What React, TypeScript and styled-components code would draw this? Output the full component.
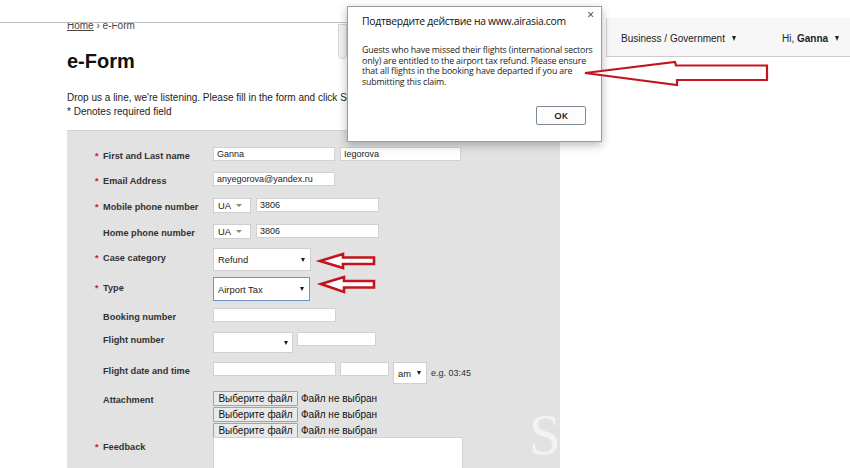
import React from "react";
import styled, { createGlobalStyle } from "styled-components";

const GlobalStyle = createGlobalStyle`
  html, body {
    margin: 0;
    padding: 0;
    background: #fff;
  }
  body {
    font-family: "Liberation Sans", Arial, sans-serif;
    color: #222;
  }
`;

const Page = styled.div`
  position: relative;
  width: 850px;
  height: 468px;
  overflow: hidden;
  display: grid;
  grid-template-columns: 606px 1fr;
  align-items: start;
`;

const Main = styled.div`
  height: 468px;
  display: flex;
  flex-direction: column;
`;

const TopStrip = styled.div`
  width: 347px;
  height: 22px;
  flex-shrink: 0;
  border-bottom: 1px solid #bdbdbd;
  display: flex;
  justify-content: flex-end;
`;

const Thumb = styled.div`
  width: 7px;
  height: 33px;
  margin-top: 24px;
  flex-shrink: 0;
  border: 1px solid #d4d4d4;
  border-radius: 0 0 4px 4px;
  background: #f2f2f2;
`;

const Content = styled.div`
  flex: 1;
  display: flex;
  flex-direction: column;
  padding-left: 67px;
`;

const Crumbs = styled.div`
  height: 8px;
  overflow: hidden;
  display: flex;
  align-items: flex-end;
  font-size: 10px;
  color: #444;
`;

const CrumbLine = styled.div`
  line-height: 11px;
  flex-shrink: 0;
  white-space: nowrap;
  a {
    color: #444;
    text-decoration: underline;
  }
`;

const Title = styled.h1`
  margin: 18px 0 0;
  font-size: 20px;
  line-height: 24px;
  font-weight: bold;
  color: #111;
`;

const Intro = styled.p`
  margin: 18px 0 0;
  font-size: 10px;
  line-height: 14px;
  color: #222;
  white-space: nowrap;
`;

const FormBox = styled.form`
  position: relative;
  overflow: hidden;
  margin-top: 11px;
  width: 493px;
  flex: 1;
  box-sizing: border-box;
  background: #e2e2e2;
  border-top: 1px solid #d2d2d2;
  padding: 16px 0 0 28px;
`;

const Watermark = styled.span`
  position: absolute;
  left: 462px;
  top: 275px;
  font-family: "Liberation Serif", "Times New Roman", serif;
  font-size: 57px;
  line-height: 57px;
  color: #f3f3f3;
`;

const Row = styled.div<{ $h: number }>`
  display: grid;
  grid-template-columns: 118px 1fr;
  align-items: start;
  height: ${(p) => p.$h}px;
`;

const Label = styled.div`
  display: flex;
  padding-top: 3px;
  font-size: 9.2px;
  line-height: 12px;
  font-weight: bold;
  color: #333;
`;

const Req = styled.span`
  width: 8px;
  flex-shrink: 0;
  color: #c8202a;
  font-size: 9px;
`;

const Fields = styled.div<{ $gap?: number }>`
  display: flex;
  align-items: flex-start;
  gap: ${(p) => p.$gap ?? 5}px;
`;

const TextInput = styled.input<{ $w: number }>`
  width: ${(p) => p.$w}px;
  height: 14px;
  box-sizing: border-box;
  margin: 0;
  padding: 0 3px;
  border: 1px solid #d2d2d2;
  background: #fff;
  font-family: "Liberation Sans", Arial, sans-serif;
  font-size: 9px;
  color: #222;
  outline: none;
`;

const Dropdown = styled.div<{ $w: number; $h: number; $focus?: boolean; $pr?: number }>`
  width: ${(p) => p.$w}px;
  height: ${(p) => p.$h}px;
  box-sizing: border-box;
  display: flex;
  align-items: center;
  justify-content: space-between;
  padding: 0 ${(p) => p.$pr ?? 5}px 0 4px;
  background: #fff;
  border: 1px solid ${(p) => (p.$focus ? "#6f93c6" : "#cfcfcf")};
  font-size: 9.4px;
  color: #222;
`;

const Caret = styled.span<{ $olive?: boolean }>`
  width: 0;
  height: 0;
  border-left: ${(p) => (p.$olive ? 3 : 2.5)}px solid transparent;
  border-right: ${(p) => (p.$olive ? 3 : 2.5)}px solid transparent;
  border-top: ${(p) => (p.$olive ? 3 : 4)}px solid ${(p) => (p.$olive ? "#8d8d63" : "#1a1a1a")};
`;

const Hint = styled.span`
  align-self: center;
  font-size: 9px;
  color: #333;
`;

const FileStack = styled.div`
  display: flex;
  flex-direction: column;
  gap: 1px;
`;

const FileRow = styled.div`
  display: flex;
  align-items: center;
  gap: 3px;
  font-size: 10px;
  color: #111;
`;

const FileButton = styled.button`
  width: 85px;
  height: 15px;
  box-sizing: border-box;
  margin: 0;
  padding: 0;
  border: 1px solid #a3a3a3;
  border-radius: 1px;
  background: #e9e9e9;
  font-family: "Liberation Sans", Arial, sans-serif;
  font-size: 10px;
  line-height: 13px;
  color: #111;
`;

const TextArea = styled.textarea`
  width: 250px;
  height: 60px;
  box-sizing: border-box;
  margin: 0;
  border: 1px solid #d2d2d2;
  background: #fff;
  resize: none;
`;

const Side = styled.div`
  display: flex;
  flex-direction: column;
`;

const Nav = styled.nav`
  margin-top: 18px;
  height: 39px;
  box-sizing: border-box;
  display: flex;
  align-items: center;
  padding: 2px 0 0 14px;
  gap: 46px;
  background: #f7f7f7;
  border-left: 1px solid #cfcfcf;
  border-bottom: 1px solid #cccccc;
  font-size: 10px;
  color: #222;
`;

const NavItem = styled.span`
  display: flex;
  align-items: center;
  gap: 7px;
  white-space: nowrap;
  b {
    font-weight: bold;
  }
`;

const NavCaret = styled.span`
  width: 0;
  height: 0;
  border-left: 2.5px solid transparent;
  border-right: 2.5px solid transparent;
  border-top: 5px solid #222;
`;

const Dialog = styled.div`
  position: absolute;
  left: 347px;
  top: 6px;
  width: 255px;
  height: 136px;
  box-sizing: border-box;
  display: flex;
  flex-direction: column;
  background: #fff;
  border: 1px solid #9c9c9c;
  box-shadow: 0 3px 9px rgba(0, 0, 0, 0.28);
  font-family: "Open Sans", "Noto Sans", sans-serif;
`;

const DialogHead = styled.div`
  display: flex;
  justify-content: space-between;
  align-items: flex-start;
  padding: 0 7px 0 14px;
`;

const DialogTitle = styled.div`
  margin-top: 6px;
  font-size: 10.4px;
  letter-spacing: -0.3px;
  line-height: 16px;
  white-space: nowrap;
  color: #111;
`;

const Close = styled.span`
  margin-top: 1px;
  font-size: 12px;
  line-height: 14px;
  color: #333;
`;

const DialogBody = styled.div`
  margin: 16px 0 0;
  padding: 0 8px 0 14px;
  display: flex;
  flex-direction: column;
  font-size: 8.8px;
  letter-spacing: -0.15px;
  color: #222;
`;

const BodyLine = styled.span`
  height: 10.6px;
  line-height: 10.6px;
  white-space: nowrap;
`;

const DialogFoot = styled.div`
  margin-top: auto;
  display: flex;
  justify-content: flex-end;
  padding: 0 15px 16px 0;
`;

const OkButton = styled.button`
  width: 50px;
  height: 19px;
  box-sizing: border-box;
  margin: 0;
  padding: 0;
  border: 1px solid #7d8898;
  border-radius: 2px;
  background: #fdfdfd;
  font-family: "Open Sans", "Noto Sans", sans-serif;
  font-size: 9.5px;
  font-weight: 600;
  color: #111;
`;

const Annotations = styled.svg`
  position: absolute;
  left: 0;
  top: 0;
  width: 850px;
  height: 468px;
  pointer-events: none;
`;

const arrows = [
  "585,73 675,62 676,65.5 767,65.5 767,80 677,80 677,85",
  "320,261 343,254 343,257.5 374,257.5 374,264 343,264 343,268",
  "321,284 344,277 344,281 374,281 374,287.5 344,287.5 344,292",
];

const message = [
  "Guests who have missed their flights (international sectors",
  "only) are entitled to the airport tax refund. Please ensure",
  "that all flights in the booking have departed if you are",
  "submitting this claim.",
];

const Field = ({ req, label, h, top = 3, children }: any) => (
  <Row $h={h}>
    <Label style={top !== 3 ? { paddingTop: top } : undefined}>
      <Req>{req ? "*" : ""}</Req>
      {label}
    </Label>
    {children}
  </Row>
);

const App = () => {
  return (
    <>
      <GlobalStyle />
      <Page>
        <Main>
          <TopStrip>
            <Thumb />
          </TopStrip>
          <Content>
            <Crumbs>
              <CrumbLine>
                <a href="#">Home</a> › e-Form
              </CrumbLine>
            </Crumbs>
            <Title>e-Form</Title>
            <Intro>
              Drop us a line, we're listening. Please fill in the form and click Submit.
              <br />* Denotes required field
            </Intro>
            <FormBox>
              <Field req label="First and Last name" h={25}>
                <Fields>
                  <TextInput $w={122} defaultValue="Ganna" />
                  <TextInput $w={121} defaultValue="Iegorova" />
                </Fields>
              </Field>
              <Field req label="Email Address" h={26}>
                <Fields>
                  <TextInput $w={122} defaultValue="anyegorova@yandex.ru" />
                </Fields>
              </Field>
              <Field req label="Mobile phone number" h={26}>
                <Fields>
                  <Dropdown $w={38} $h={15} $pr={8}>
                    UA <Caret $olive />
                  </Dropdown>
                  <TextInput $w={123} defaultValue="3806" />
                </Fields>
              </Field>
              <Field label="Home phone number" h={24}>
                <Fields>
                  <Dropdown $w={38} $h={15} $pr={8}>
                    UA <Caret $olive />
                  </Dropdown>
                  <TextInput $w={123} defaultValue="3806" />
                </Fields>
              </Field>
              <Field req label="Case category" h={29} top={4}>
                <Fields>
                  <Dropdown $w={98} $h={23}>
                    Refund <Caret />
                  </Dropdown>
                </Fields>
              </Field>
              <Field req label="Type" h={31} top={5}>
                <Fields>
                  <Dropdown $w={97} $h={24} $focus>
                    Airport Tax <Caret />
                  </Dropdown>
                </Fields>
              </Field>
              <Field label="Booking number" h={24}>
                <Fields>
                  <TextInput $w={123} />
                </Fields>
              </Field>
              <Field label="Flight number" h={30} top={2}>
                <Fields $gap={4}>
                  <Dropdown $w={80} $h={21} $pr={4}>
                    <span />
                    <Caret />
                  </Dropdown>
                  <TextInput $w={79} />
                </Fields>
              </Field>
              <Field label="Flight date and time" h={29}>
                <Fields $gap={4}>
                  <TextInput $w={123} />
                  <TextInput $w={49} />
                  <Dropdown $w={34} $h={22}>
                    am <Caret />
                  </Dropdown>
                  <Hint>e.g. 03:45</Hint>
                </Fields>
              </Field>
              <Field label="Attachment" h={46}>
                <FileStack>
                  {[0, 1, 2].map((i) => (
                    <FileRow key={i}>
                      <FileButton type="button">Выберите файл</FileButton>
                      Файл не выбран
                    </FileRow>
                  ))}
                </FileStack>
              </Field>
              <Field req label="Feedback" h={70} top={4}>
                <TextArea />
              </Field>
              <Watermark>S</Watermark>
            </FormBox>
          </Content>
        </Main>
        <Side>
          <Nav>
            <NavItem>
              Business / Government <NavCaret />
            </NavItem>
            <NavItem>
              <span>
                Hi, <b>Ganna</b>
              </span>
              <NavCaret />
            </NavItem>
          </Nav>
        </Side>
        <Dialog>
          <DialogHead>
            <DialogTitle>Подтвердите действие на www.airasia.com</DialogTitle>
            <Close>×</Close>
          </DialogHead>
          <DialogBody>
            {message.map((line) => (
              <BodyLine key={line}>{line}</BodyLine>
            ))}
          </DialogBody>
          <DialogFoot>
            <OkButton type="button">OK</OkButton>
          </DialogFoot>
        </Dialog>
        <Annotations viewBox="0 0 850 468">
          {arrows.map((pts, i) => (
            <polygon
              key={i}
              points={pts}
              fill="#fff"
              stroke="#c3141e"
              strokeWidth={i === 0 ? 2.2 : 2.6}
              strokeLinejoin="miter"
            />
          ))}
        </Annotations>
      </Page>
    </>
  );
};

export default App;
